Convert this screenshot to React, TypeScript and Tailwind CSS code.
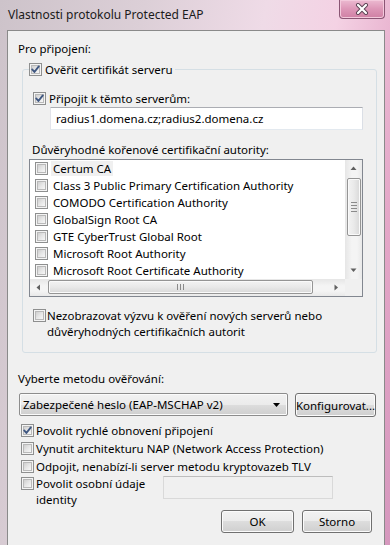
import React from 'react';

const btnBg =
  'bg-[linear-gradient(180deg,#f2f2f2_0%,#ebebeb_50%,#dddddd_50%,#cfcfcf_100%)] shadow-[inset_0_0_0_1px_#fbfbfb]';

function Check({ on }: { on?: boolean }) {
  return (
    <span className="relative flex h-[13px] w-[13px] shrink-0 items-center justify-center border border-[#8e8f8f] bg-[#f4f4f4]">
      <span className="h-[9px] w-[9px] border border-[#b9b9b9] bg-gradient-to-br from-[#cfcfcf] via-[#e6e6e6] to-[#f7f7f7]" />
      {on && (
        <svg viewBox="0 0 13 13" className="absolute left-[-1px] top-[-1px] h-[13px] w-[13px]">
          <path d="M3.2 6.4 L5.4 9 L9.8 3.4" fill="none" stroke="#3f5781" strokeWidth="1.9" strokeLinecap="round" strokeLinejoin="round" />
        </svg>
      )}
    </span>
  );
}

function Arrow({ dir }: { dir: 'up' | 'down' | 'left' | 'right' }) {
  const d = {
    up: 'M0.5 4 L3.5 0.5 L6.5 4 Z',
    down: 'M0.5 0.5 L3.5 4 L6.5 0.5 Z',
    left: 'M4 0.5 L0.5 3.5 L4 6.5 Z',
    right: 'M0.5 0.5 L4 3.5 L0.5 6.5 Z',
  }[dir];
  const size = dir === 'up' || dir === 'down' ? 'h-[5px] w-[7px]' : 'h-[7px] w-[5px]';
  const vb = dir === 'up' || dir === 'down' ? '0 0 7 5' : '0 0 5 7';
  return (
    <svg viewBox={vb} className={size}>
      <path d={d} fill="#606060" />
    </svg>
  );
}

const certs = [
  'Certum CA',
  'Class 3 Public Primary Certification Authority',
  'COMODO Certification Authority',
  'GlobalSign Root CA',
  'GTE CyberTrust Global Root',
  'Microsoft Root Authority',
  'Microsoft Root Certificate Authority',
];

export default function App() {
  return (
    <div className="h-[545px] w-[390px] overflow-hidden bg-[linear-gradient(100deg,#cdc3ca_0%,#dccfd7_30%,#efdbe7_55%,#f4d2e4_70%,#e4a6c7_88%,#d597bd_100%)] font-['Noto_Sans','Open_Sans',sans-serif] text-[11.5px] leading-[15px] text-black">
      {/* title bar */}
      <div className="relative flex h-[30px] items-center pb-[1px] pl-[8px]">
        <span className="text-[12px] text-[#1b1b1b]">Vlastnosti protokolu Protected EAP</span>
        <div className="absolute right-[5px] top-0 flex h-[19px] w-[46px] items-center justify-center rounded-b-[4px] border border-t-0 border-[#8a5574] bg-[linear-gradient(180deg,#ecbad1_0%,#dd96b7_50%,#cf80a4_100%)] shadow-[inset_0_0_0_1px_#f3c9dc]">
          <svg viewBox="0 0 14 12" className="h-[12px] w-[14px]">
            <path d="M3 2 L11 10 M11 2 L3 10" stroke="#5a4152" strokeWidth="4" strokeLinecap="round" />
            <path d="M3 2 L11 10 M11 2 L3 10" stroke="#ffffff" strokeWidth="2.2" strokeLinecap="round" />
          </svg>
        </div>
      </div>

      {/* client area */}
      <div className="ml-[7px] h-[515px] w-[378px] border-l border-r border-t border-[#8a8a8a] bg-[#f0f0f0]">
        <div className="ml-[10px] mt-[10px] h-[15px]">Pro připojení:</div>

        <fieldset className="ml-[14px] mt-[6px] w-[355px] rounded-[3px] border border-[#d5dfe5] pb-[12px]">
          <legend className="ml-[6px] pr-[2px]">
            <span className="flex h-[15px] items-center gap-[3px]">
              <Check on />
              <span>Ověřit certifikát serveru</span>
            </span>
          </legend>

          <div className="ml-[10px] mt-[14px] flex h-[15px] items-center gap-[3px]">
            <Check on />
            <span>Připojit k těmto serverům:</span>
          </div>

          <div className="ml-[27px] mt-[1px] flex h-[23px] w-[313px] items-center border border-[#abadb3] border-b-[#e3e9ef] border-l-[#e2e3ea] border-r-[#dbdfe6] bg-white pl-[5px]">
            radius1.domena.cz;radius2.domena.cz
          </div>

          <div className="ml-[9px] mt-[12px] h-[15px]">Důvěryhodné kořenové certifikační autority:</div>

          <div className="ml-[6px] mt-[2px] flex h-[138px] w-[334px] flex-col border border-[#828790] bg-white">
            <div className="flex h-[119px]">
              <div className="flex w-[315px] flex-col">
                {certs.map((c, i) => (
                  <div key={c} className="flex h-[17px] items-center pl-[5px]">
                    <Check />
                    <span className={'ml-[3px] px-[2px] ' + (i === 0 ? 'bg-[#f0f0f0]' : '')}>{c}</span>
                  </div>
                ))}
              </div>
              <div className="flex w-[17px] flex-col bg-[linear-gradient(90deg,#e6e6e6_0%,#f4f4f4_40%,#f4f4f4_70%,#e9e9e9_100%)]">
                <div className="flex h-[17px] items-center justify-center">
                  <Arrow dir="up" />
                </div>
                <div className="flex-1">
                  <div className="mx-auto mt-[1px] flex h-[58px] w-[14px] flex-col items-center justify-center gap-[2px] rounded-[2px] border border-[#959595] bg-[linear-gradient(90deg,#f3f3f3_0%,#e9e9e9_50%,#d8d8d8_100%)] shadow-[inset_0_0_0_1px_#fafafa]">
                    <span className="h-px w-[6px] bg-[#8a8a8a]" />
                    <span className="h-px w-[6px] bg-[#8a8a8a]" />
                    <span className="h-px w-[6px] bg-[#8a8a8a]" />
                    <span className="h-px w-[6px] bg-[#8a8a8a]" />
                  </div>
                </div>
                <div className="flex h-[17px] items-center justify-center">
                  <Arrow dir="down" />
                </div>
              </div>
            </div>
            <div className="flex h-[17px]">
              <div className="flex w-[315px] bg-[linear-gradient(180deg,#e6e6e6_0%,#f4f4f4_40%,#f4f4f4_70%,#e9e9e9_100%)]">
                <div className="flex w-[17px] items-center justify-center">
                  <Arrow dir="left" />
                </div>
                <div className="ml-[1px] mt-[1px] flex h-[14px] w-[265px] items-center justify-center gap-[2px] rounded-[2px] border border-[#959595] bg-[linear-gradient(180deg,#f3f3f3_0%,#e9e9e9_50%,#d8d8d8_100%)] shadow-[inset_0_0_0_1px_#fafafa]">
                  <span className="h-[6px] w-px bg-[#8a8a8a]" />
                  <span className="h-[6px] w-px bg-[#8a8a8a]" />
                  <span className="h-[6px] w-px bg-[#8a8a8a]" />
                </div>
                <div className="flex-1" />
                <div className="flex w-[17px] items-center justify-center">
                  <Arrow dir="right" />
                </div>
              </div>
              <div className="w-[17px] bg-[#f0f0f0]" />
            </div>
          </div>

          <div className="ml-[10px] mt-[11px] flex items-start gap-[1px]">
            <span className="mt-[1px]">
              <Check />
            </span>
            <span className="leading-[16px]">
              Nezobrazovat výzvu k ověření nových serverů nebo
              <br />
              důvěryhodných certifikačních autorit
            </span>
          </div>
        </fieldset>

        <div className="ml-[10px] mt-[18px] h-[15px]">Vyberte metodu ověřování:</div>

        <div className="ml-[11px] mt-[7px] flex items-start">
          <div className={'flex h-[23px] w-[269px] items-center justify-between rounded-[2px] border border-[#8d8d8d] pl-[3px] pr-[7px] ' + btnBg}>
            <span>Zabezpečené heslo (EAP-MSCHAP v2)</span>
            <svg viewBox="0 0 7 4" className="h-[4px] w-[7px]">
              <path d="M0 0 L7 0 L3.5 4 Z" fill="#000" />
            </svg>
          </div>
          <div className={'ml-[7px] flex h-[24px] w-[81px] items-center justify-center rounded-[3px] border border-[#707070] ' + btnBg}>
            Konfigurovat...
          </div>
        </div>

        <div className="ml-[13px] mt-[6px] flex flex-col gap-[3px]">
          <div className="flex h-[15px] items-center gap-[2px]">
            <Check on />
            <span>Povolit rychlé obnovení připojení</span>
          </div>
          <div className="flex h-[15px] items-center gap-[2px]">
            <Check />
            <span>Vynutit architekturu NAP (Network Access Protection)</span>
          </div>
          <div className="flex h-[15px] items-center gap-[2px]">
            <Check />
            <span>Odpojit, nenabízí-li server metodu kryptovazeb TLV</span>
          </div>
          <div className="mt-[-1px] flex items-start">
            <div className="flex w-[142px] items-start gap-[2px]">
              <span className="mt-[1px]">
                <Check />
              </span>
              <span className="leading-[16px]">
                Povolit osobní údaje
                <br />
                identity
              </span>
            </div>
            <div className="h-[23px] w-[170px] border border-[#d9d9d9] border-t-[#bdbdbd] bg-[#f0f0f0]" />
          </div>
        </div>

        <div className="ml-[213px] mt-[2px] flex gap-[8px]">
          <div className={'flex h-[23px] w-[73px] items-center justify-center rounded-[3px] border border-[#707070] ' + btnBg}>OK</div>
          <div className={'flex h-[23px] w-[70px] items-center justify-center rounded-[3px] border border-[#707070] ' + btnBg}>Storno</div>
        </div>
      </div>
    </div>
  );
}
